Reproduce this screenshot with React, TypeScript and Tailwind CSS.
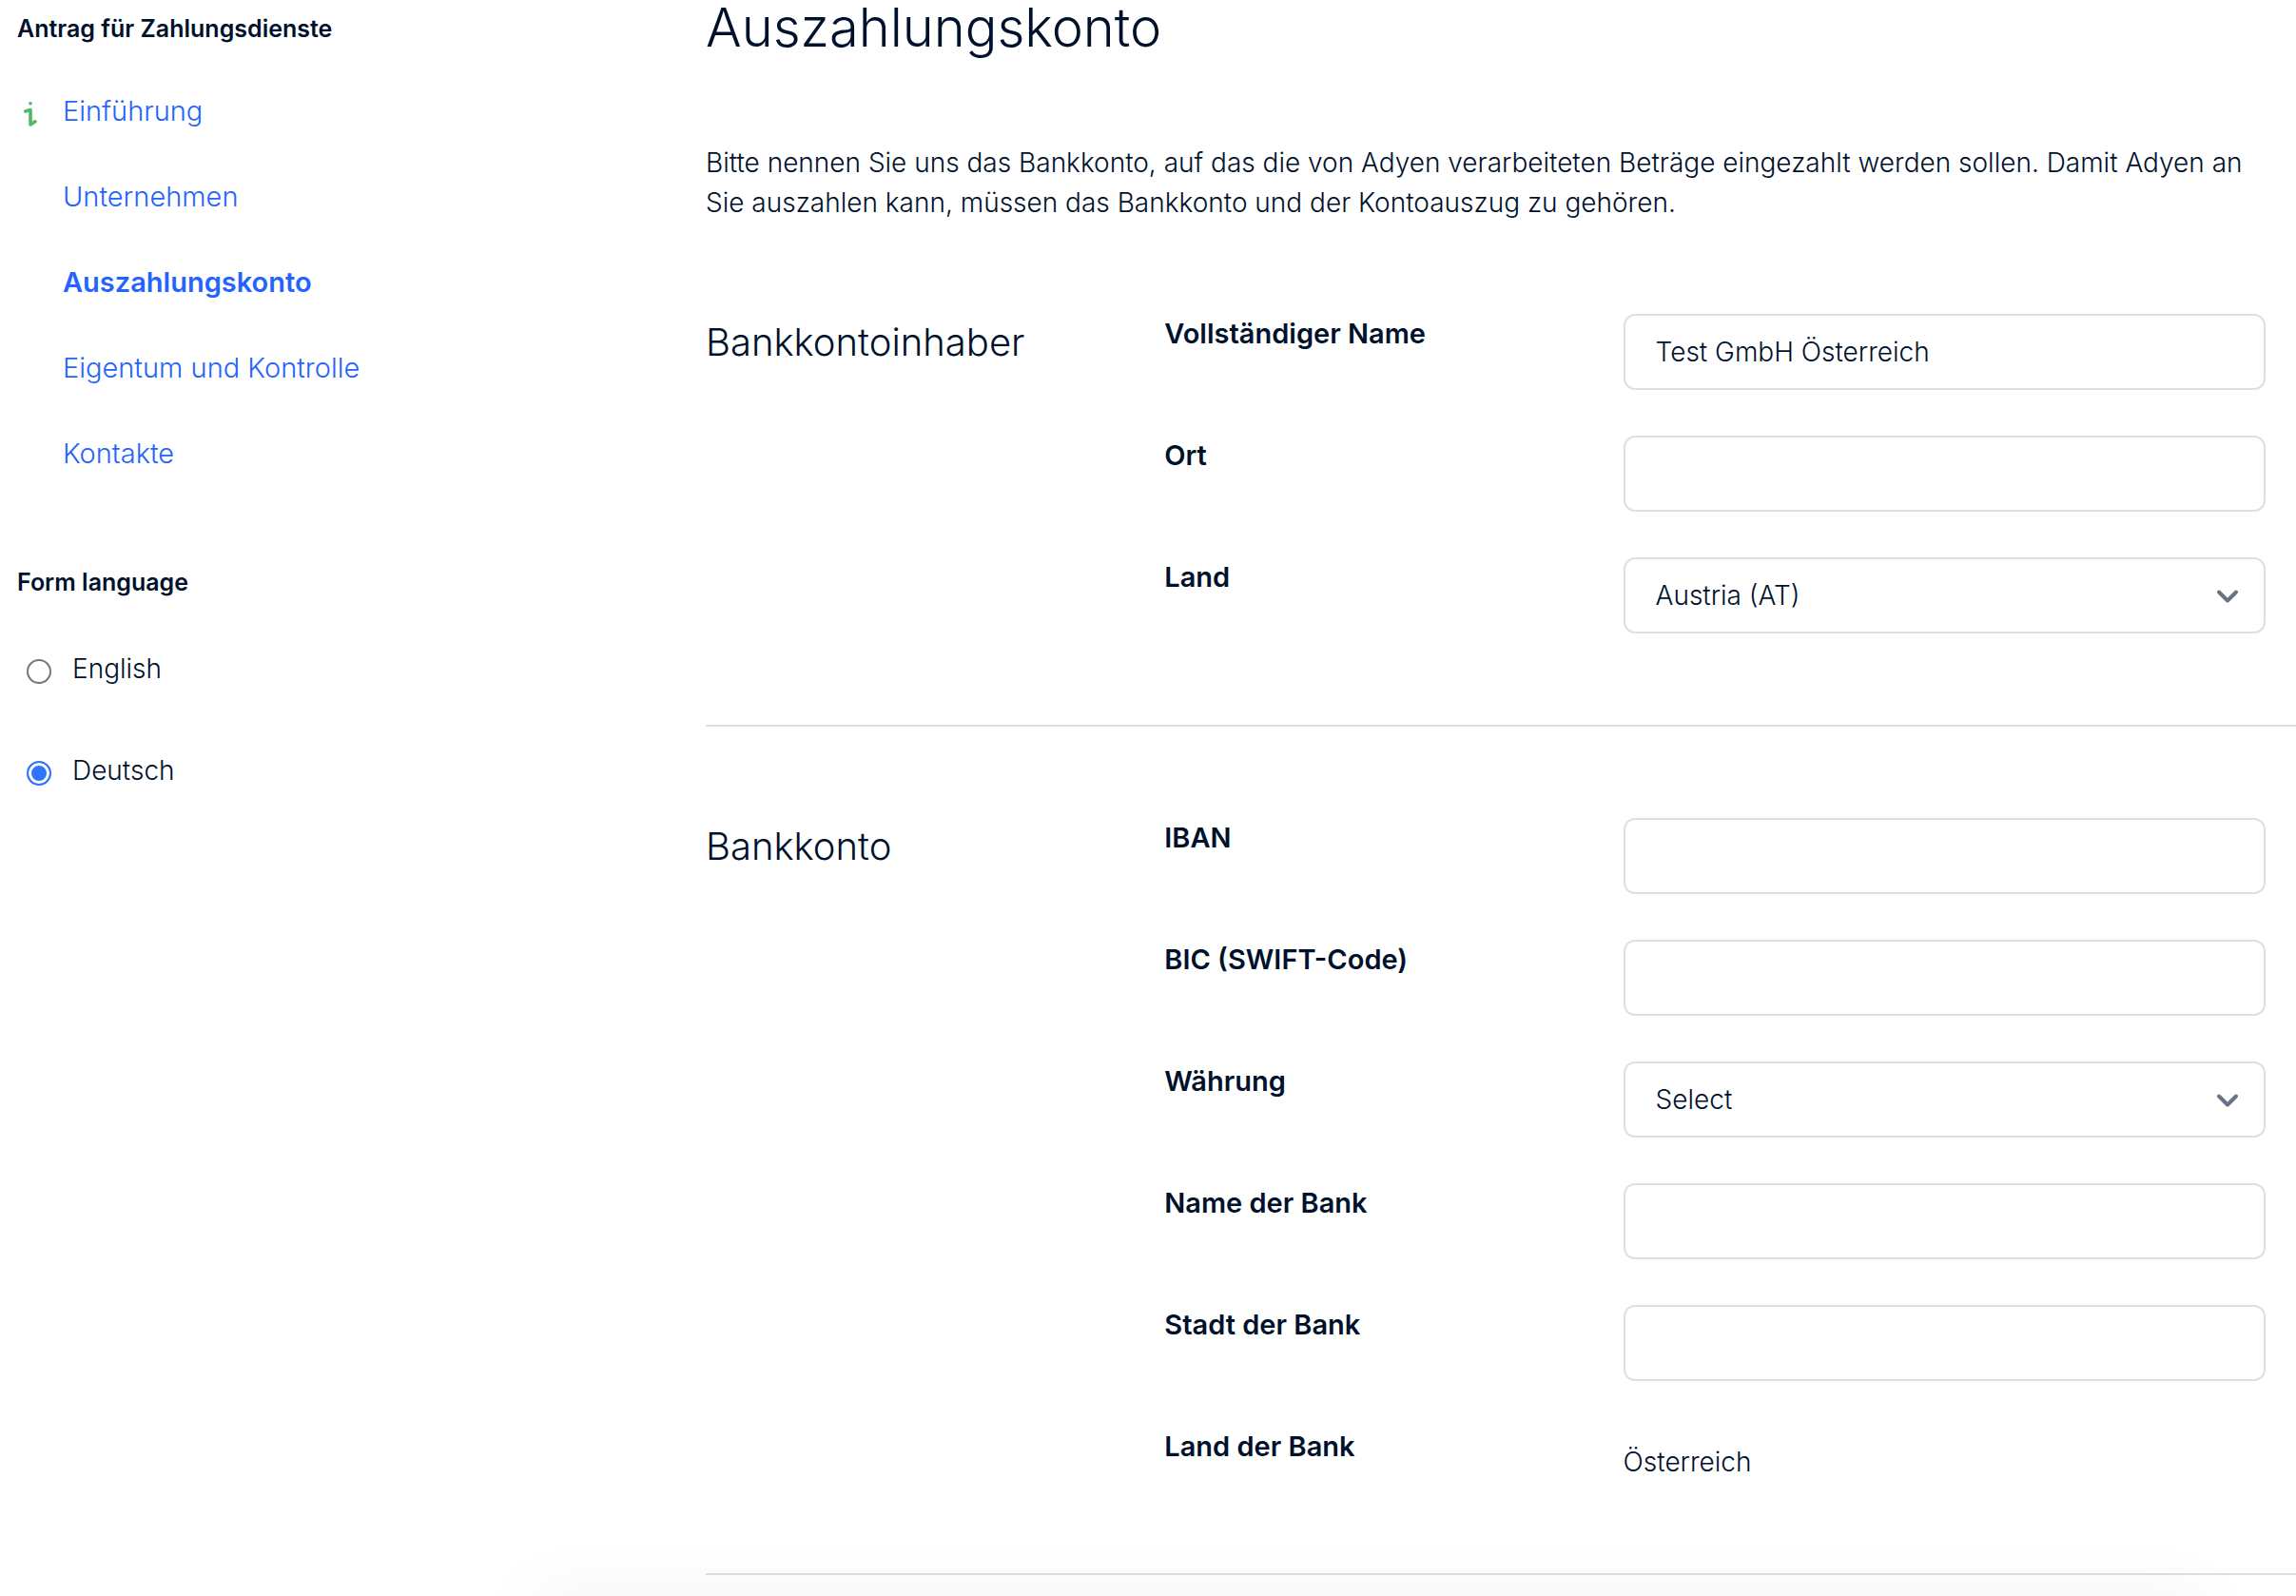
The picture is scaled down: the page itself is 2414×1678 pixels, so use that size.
import { useState } from 'react'
import type { ReactNode } from 'react'

const navItems = [
  { label: 'Einführung', icon: true },
  { label: 'Unternehmen' },
  { label: 'Auszahlungskonto', active: true },
  { label: 'Eigentum und Kontrolle' },
  { label: 'Kontakte' },
]

const languages = [
  { value: 'en', label: 'English' },
  { value: 'de', label: 'Deutsch' },
]

const controlClass =
  'block w-full h-20 px-8 rounded-xl border-2 border-[#dce0e5] bg-white focus:outline-none focus:border-[#2f73ff]'

function InfoIcon() {
  return (
    <svg viewBox="0 0 14 26" className="w-[14px] h-[26px]" fill="none" stroke="#4fbb63" strokeLinecap="round" strokeLinejoin="round" aria-hidden="true">
      <circle cx="7" cy="1.8" r="1.8" fill="#4fbb63" stroke="none" />
      <path d="M1.8 10 L7 8.6 V24 L12 20.8" strokeWidth="3.6" />
    </svg>
  )
}

function Section({ title, children }: { title: string; children: ReactNode }) {
  return (
    <section className="border-b-2 border-[#dce0e5] pb-24">
      <div className="grid grid-cols-[2fr_2fr_3fr] gap-x-8 pr-8">
        <h2 className="text-[40px] leading-[60px] font-light">{title}</h2>
        <div className="col-span-2 grid grid-cols-subgrid gap-y-12">{children}</div>
      </div>
    </section>
  )
}

function Row({ id, label, children }: { id: string; label: string; children: ReactNode }) {
  return (
    <div className="col-span-2 grid grid-cols-subgrid items-start">
      <label htmlFor={id} className="text-[29px] leading-[42px] font-semibold">{label}</label>
      {children}
    </div>
  )
}

function TextField({ id, label, value = '' }: { id: string; label: string; value?: string }) {
  return (
    <Row id={id} label={label}>
      <input id={id} type="text" defaultValue={value} className={controlClass} />
    </Row>
  )
}

function SelectField({ id, label, options }: { id: string; label: string; options: string[] }) {
  return (
    <Row id={id} label={label}>
      <div className="relative">
        <select id={id} className={`${controlClass} appearance-none`}>
          {options.map(o => <option key={o}>{o}</option>)}
        </select>
        <svg viewBox="0 0 24 16" className="absolute right-7 top-[33px] w-6 h-4 pointer-events-none" fill="none" stroke="#687385" strokeWidth="4" strokeLinecap="round" strokeLinejoin="round" aria-hidden="true">
          <path d="M3 3.5 L12 12.5 L21 3.5" />
        </svg>
      </div>
    </Row>
  )
}

export default function App() {
  const [language, setLanguage] = useState('de')

  return (
    <div className="flex min-h-screen bg-white text-[#00112c] text-[28px] font-light font-['Inter','Liberation_Sans',sans-serif]">
      <aside className="w-[742px] shrink-0 pl-[18px] pt-3">
        <h2 className="text-[25px] leading-9 font-semibold">Antrag für Zahlungsdienste</h2>
        <nav className="mt-12">
          <ul className="flex flex-col gap-12">
            {navItems.map(item => (
              <li key={item.label} className="flex items-center h-[42px] text-[29px]">
                <span className="w-12 pl-[7px] pt-[6px]">{item.icon && <InfoIcon />}</span>
                <a href="#" className={item.active ? 'font-semibold text-[#2563ff]' : 'text-[#2563ff]'}>{item.label}</a>
              </li>
            ))}
          </ul>
        </nav>

        <fieldset className="mt-24">
          <legend className="text-[25px] leading-9 font-semibold">Form language</legend>
          <div className="flex flex-col gap-[65px] pt-[52px] pl-[10px]">
            {languages.map(l => (
              <label key={l.value} className="flex items-center gap-[22px] h-[42px]">
                <input
                  type="radio"
                  name="language"
                  value={l.value}
                  checked={language === l.value}
                  onChange={() => setLanguage(l.value)}
                  className="appearance-none size-[26px] mt-[6px] rounded-full border-2 border-[#767676] checked:border-[#2f73ff] checked:bg-[#2f73ff] checked:shadow-[inset_0_0_0_3px_white]"
                />
                {l.label}
              </label>
            ))}
          </div>
        </fieldset>
      </aside>

      <main className="flex-1 min-w-0">
        <h1 className="text-[56px] leading-[58px] font-light">Auszahlungskonto</h1>
        <p className="mt-[92px] pr-8 leading-[42px]">
          Bitte nennen Sie uns das Bankkonto, auf das die von Adyen verarbeiteten Beträge eingezahlt werden sollen. Damit Adyen an
          Sie auszahlen kann, müssen das Bankkonto und der Kontoauszug zu gehören.
        </p>

        <form className="mt-24 flex flex-col gap-24">
          <Section title="Bankkontoinhaber">
            <TextField id="full-name" label="Vollständiger Name" value="Test GmbH Österreich" />
            <TextField id="city" label="Ort" />
            <SelectField id="country" label="Land" options={['Austria (AT)']} />
          </Section>

          <Section title="Bankkonto">
            <TextField id="iban" label="IBAN" />
            <TextField id="bic" label="BIC (SWIFT-Code)" />
            <SelectField id="currency" label="Währung" options={['Select', 'EUR']} />
            <TextField id="bank-name" label="Name der Bank" />
            <TextField id="bank-city" label="Stadt der Bank" />
            <Row id="bank-country" label="Land der Bank">
              <output id="bank-country" className="pt-4 leading-[42px]">Österreich</output>
            </Row>
          </Section>
        </form>
      </main>

      {/* shadow of the action bar that sits under the fold */}
      <div className="fixed top-full left-[560px] right-[100px] h-40 pointer-events-none shadow-[0_0_80px_rgba(0,0,0,0.05)]" />
    </div>
  )
}
